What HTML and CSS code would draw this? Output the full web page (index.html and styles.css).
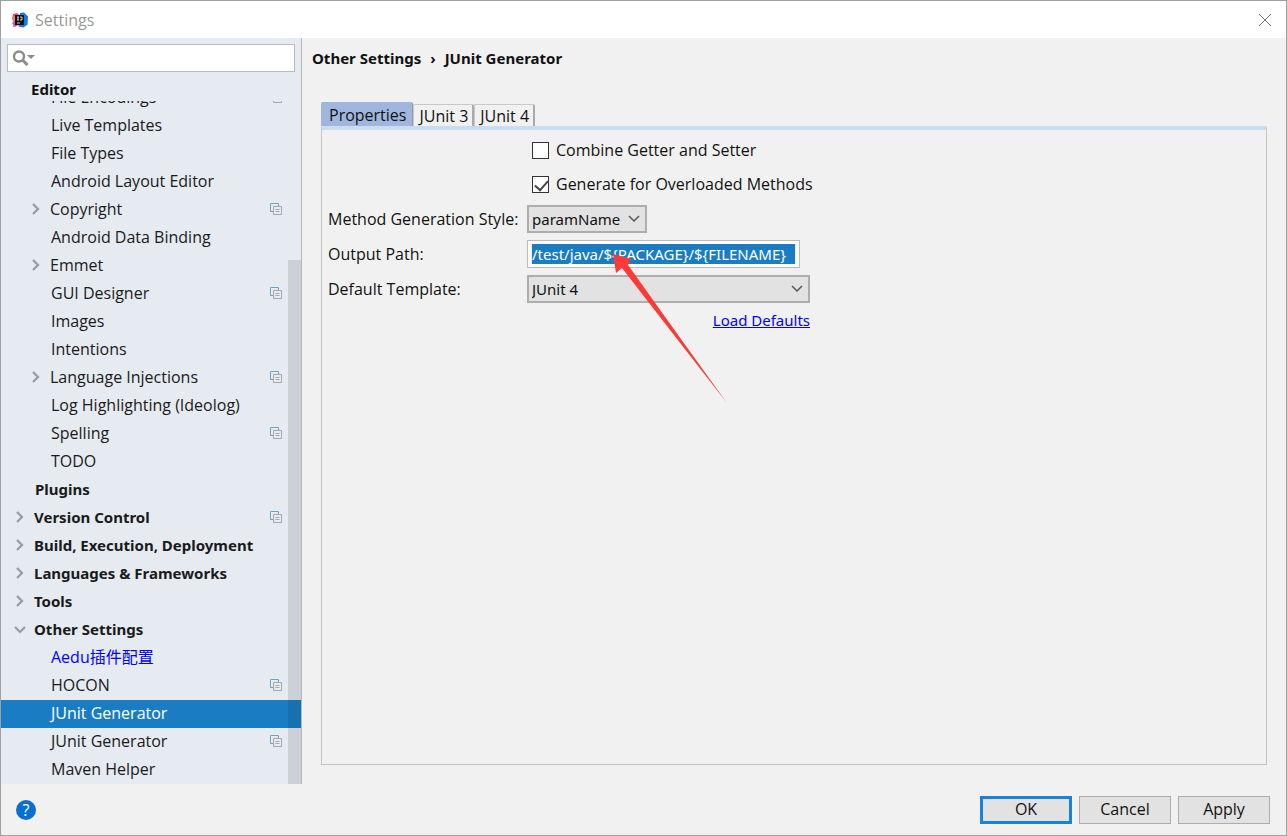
FILE: index.html
```html
<!DOCTYPE html>
<html lang="en">
<head>
<meta charset="utf-8">
<title>Settings</title>
<link rel="stylesheet" href="styles.css">
</head>
<body>
<svg class="defs" aria-hidden="true">
  <symbol id="right" viewBox="0 0 14 14"><path d="M4 2l5 5-5 5" fill="none" stroke="#999c9f" stroke-width="2.200"/></symbol>
  <symbol id="down" viewBox="0 0 14 14"><path d="M2 5l5 5 5-5" fill="none" stroke="#999c9f" stroke-width="2.200"/></symbol>
  <symbol id="copy" viewBox="0 0 12 12"><path d="M3 8.500H.5V.5h8V3" fill="none" stroke="#6fa3bf"/><path d="M3.500 3.500h8v8h-8zM5.500 6.500h4M5.500 8.500h4" fill="none" stroke="#a3a8ad"/></symbol>
  <symbol id="chevron" viewBox="0 0 12 8"><path d="M1 1l5 5 5-5" fill="none" stroke="#555" stroke-width="1.500"/></symbol>
</svg>
<div class="window">
  <header class="titlebar">
    <svg class="logo" viewBox="0 0 16 16" aria-hidden="true">
      <path d="M1 2l4-1 4 4-4 9-4 1 1-5-2-3z" fill="#f0466f"/>
      <path d="M0 11l3-3 3 5-3 1.500z" fill="#b65ad0"/>
      <path d="M8 1l4-.5 4 4-.5 8-4 3-5-1z" fill="#1479e0"/>
      <path d="M1 5l2-1v5l-2-1z" fill="#f58a3c"/>
      <path d="M3 3h9v10H3z" fill="#101014"/>
      <path d="M5 5h2M6 5v3M5 8h2M8 5h2v3H8M5 11h3" stroke="#fff" fill="none" stroke-width=".8"/>
    </svg>
    <h1 class="title">Settings</h1>
    <button class="close" aria-label="Close"><svg viewBox="0 0 14 14" aria-hidden="true"><path d="M1 1l12 12M13 1L1 13" stroke="#777" fill="none"/></svg></button>
  </header>
  <div class="body">
    <aside class="sidebar">
      <div class="search">
        <svg viewBox="0 0 24 16" aria-hidden="true"><circle cx="7" cy="6.500" r="5" fill="none" stroke="#8c8c8c" stroke-width="2.400"/><path d="M10.500 10l5 5" stroke="#8c8c8c" stroke-width="3"/><path d="M15 5h8l-4 4z" fill="#8c8c8c"/></svg>
        <input type="search" aria-label="Search settings">
      </div>
      <div class="group">Editor</div>
      <nav class="tree" aria-label="Settings">
        <ul>
          <li><a class="row leaf" href="#">File Encodings<svg class="copy"><use href="#copy"/></svg></a></li>
          <li><a class="row leaf" href="#">Live Templates</a></li>
          <li><a class="row leaf" href="#">File Types</a></li>
          <li><a class="row leaf" href="#">Android Layout Editor</a></li>
          <li><a class="row branch" href="#"><svg class="arrow"><use href="#right"/></svg>Copyright<svg class="copy"><use href="#copy"/></svg></a></li>
          <li><a class="row leaf" href="#">Android Data Binding</a></li>
          <li><a class="row branch" href="#"><svg class="arrow"><use href="#right"/></svg>Emmet</a></li>
          <li><a class="row leaf" href="#">GUI Designer<svg class="copy"><use href="#copy"/></svg></a></li>
          <li><a class="row leaf" href="#">Images</a></li>
          <li><a class="row leaf" href="#">Intentions</a></li>
          <li><a class="row branch" href="#"><svg class="arrow"><use href="#right"/></svg>Language Injections<svg class="copy"><use href="#copy"/></svg></a></li>
          <li><a class="row leaf" href="#">Log Highlighting (Ideolog)</a></li>
          <li><a class="row leaf" href="#">Spelling<svg class="copy"><use href="#copy"/></svg></a></li>
          <li><a class="row leaf" href="#">TODO</a></li>
          <li><a class="row top plain" href="#">Plugins</a></li>
          <li><a class="row top" href="#"><svg class="arrow"><use href="#right"/></svg>Version Control<svg class="copy"><use href="#copy"/></svg></a></li>
          <li><a class="row top" href="#"><svg class="arrow"><use href="#right"/></svg>Build, Execution, Deployment</a></li>
          <li><a class="row top" href="#"><svg class="arrow"><use href="#right"/></svg>Languages &amp; Frameworks</a></li>
          <li><a class="row top" href="#"><svg class="arrow"><use href="#right"/></svg>Tools</a></li>
          <li><a class="row top" href="#"><svg class="arrow"><use href="#down"/></svg>Other Settings</a></li>
          <li><a class="row leaf modified" href="#">Aedu插件配置</a></li>
          <li><a class="row leaf" href="#">HOCON<svg class="copy"><use href="#copy"/></svg></a></li>
          <li><a class="row leaf selected" href="#" aria-current="page">JUnit Generator</a></li>
          <li><a class="row leaf" href="#">JUnit Generator<svg class="copy"><use href="#copy"/></svg></a></li>
          <li><a class="row leaf" href="#">Maven Helper</a></li>
        </ul>
        <div class="thumb"></div>
      </nav>
    </aside>
    <main class="content">
      <h2 class="crumbs"><span>Other Settings</span><span>›</span><span>JUnit Generator</span></h2>
      <div class="tabs" role="tablist">
        <button class="tab active" role="tab" aria-selected="true">Properties</button>
        <button class="tab" role="tab" aria-selected="false">JUnit 3</button>
        <button class="tab" role="tab" aria-selected="false">JUnit 4</button>
      </div>
      <form class="panel" role="tabpanel">
        <label class="check"><input type="checkbox"><span>Combine Getter and Setter</span></label>
        <label class="check"><input type="checkbox" checked><span>Generate for Overloaded Methods</span></label>
        <label for="style">Method Generation Style:</label>
        <div class="combo short"><select id="style"><option>paramName</option></select><svg class="chevron"><use href="#chevron"/></svg></div>
        <label for="path">Output Path:</label>
        <div class="path">
          <input id="path" type="text" value="/test/java/${PACKAGE}/${FILENAME}">
          <svg class="pointer" viewBox="0 0 116 152" aria-hidden="true"><path d="M0 0L18 5 15 11Q80 102 114 149Q60 80 9 14L3 19z" fill="#fc3a36"/></svg>
        </div>
        <label for="template">Default Template:</label>
        <div class="combo"><select id="template"><option>JUnit 4</option></select><svg class="chevron"><use href="#chevron"/></svg></div>
        <a class="defaults" href="#">Load Defaults</a>
      </form>
    </main>
  </div>
  <footer class="footer">
    <button class="help" aria-label="Help">?</button>
    <button class="btn primary">OK</button>
    <button class="btn">Cancel</button>
    <button class="btn">Apply</button>
  </footer>
</div>
</body>
</html>
```
FILE: styles.css
```css
* { box-sizing: border-box; }
body { margin: 0; font: 16px/20px "Open Sans", "Noto Sans CJK SC", sans-serif; color: #111; }
button, input, select { font: inherit; color: inherit; }
.defs { display: none; }
.window { display: flex; flex-direction: column; height: 100vh; border: 1px solid #a0a0a0; background: #f1f1f1; }

.titlebar { display: flex; align-items: center; height: 37px; padding: 0 14px 0 11px; background: #fff; }
.logo { width: 16px; height: 16px; }
.title { margin: 0 auto 0 7px; font-size: 16px; font-weight: 400; color: #999; }
.close { display: flex; padding: 0; border: 0; background: none; }
.close svg { width: 14px; height: 14px; }

.body { display: flex; flex: 1; min-height: 0; }
.sidebar { display: flex; flex-direction: column; flex: 0 0 301px; border-right: 1px solid #b4b6b8; background: #e6eaf1; }
.search { display: flex; align-items: center; flex: none; height: 28px; margin: 6px 6px 0; padding-left: 4px; border: 1px solid #b9bcbf; background: #fff; }
.search svg { flex: none; width: 24px; height: 16px; }
.search input { flex: 1; min-width: 0; height: 24px; border: 0; outline: 0; background: none; }
.group { flex: none; height: 29px; padding: 7px 30px 0; font-weight: 700; }
.tree { position: relative; display: flex; flex: 1; flex-direction: column; justify-content: flex-end; min-height: 0; overflow: hidden; }
.tree ul { flex: none; margin: 0; padding: 0; list-style: none; }
.row { display: flex; align-items: center; height: 28px; padding: 0 19px 2px 0; color: #1a1a1a; text-decoration: none; white-space: nowrap; }
.leaf { padding-left: 50px; }
.branch { padding-left: 28px; }
.top { padding-left: 12px; font-weight: 700; }
.top, .crumbs, .group, .combo, .path, .defaults { font-family: "Noto Sans", sans-serif; font-size: 15px; }
.plain { padding-left: 34px; }
.arrow { width: 14px; height: 14px; margin-right: 7px; }
.copy { width: 12px; height: 12px; margin-left: auto; }
.modified { color: #00f; }
.selected { background: #1a7dc4; color: #fff; }
.thumb { position: absolute; top: 159px; right: 0; bottom: 0; width: 13px; background: rgb(0 10 10 / 11%); }

.content { display: flex; flex: 1; flex-direction: column; min-width: 0; padding: 10px 19px 19px; }
.crumbs { display: flex; gap: 9px; margin: 0 0 34px -9px; font-weight: 700; }
.tabs { display: flex; align-items: flex-end; }
.tab { height: 22px; padding: 0 4px 0 5px; border: 1px solid #c8c8c8; border-right: 2px solid #aaa; border-bottom: 0; border-radius: 2px 2px 0 0; background: #f1f1f1; }
.active { height: 24px; padding: 0 6px 0 7px; border-color: #a0b6df; border-right: 1px solid #999; background: #a0b6df; }
.panel { display: grid; flex: 1; grid-template-columns: 199px 283px; align-content: start; align-items: center; gap: 7px 0; padding: 7px 6px; border: 1px solid #c4c4c4; border-top: 4px solid #cbdcf0; }
.panel .check { display: flex; grid-column: 2; align-items: center; gap: 7px; height: 27px; padding: 0 0 0 5px; }
.check span { padding-bottom: 2px; white-space: nowrap; }
.check input { appearance: none; width: 17px; height: 17px; margin: 0; border: 1px solid #333; background: #fff; }
.check input:checked::after { content: ""; display: block; width: 11px; height: 6px; margin: 3px 2px; border: solid #444; border-width: 0 0 2px 2px; transform: rotate(-48deg); }
.combo { position: relative; }
.short { width: 120px; }
.combo select { appearance: none; display: block; width: 100%; height: 28px; padding: 0 4px 1px 3px; border: 2px solid #adadad; border-radius: 0; background: #e2e2e2; }
.chevron { position: absolute; top: 10px; right: 7px; width: 12px; height: 8px; pointer-events: none; }
.path { position: relative; width: 273px; }
.path input { display: block; width: 100%; height: 28px; padding: 3px 4px; border: 1px solid #bbb; outline: 0; background: #1a7dc4 content-box; box-shadow: inset 0 0 0 3px #fff; color: #fff; }
.pointer { position: absolute; z-index: 1; top: 14px; left: 86px; width: 116px; height: 152px; pointer-events: none; }
.defaults { grid-column: 2; justify-self: end; color: #00f; }

.footer { display: flex; flex: none; align-items: center; gap: 7px; height: 51px; padding: 0 16px 0 15px; }
.help { width: 20px; height: 20px; margin-right: auto; padding: 0; border: 0; border-radius: 50%; background: #0a6fd0; color: #fff; }
.btn { width: 92px; height: 28px; padding: 0 0 2px; border: 1px solid #adadad; background: #e2e2e2; }
.primary { border: 3px solid #1883d7; }
```
